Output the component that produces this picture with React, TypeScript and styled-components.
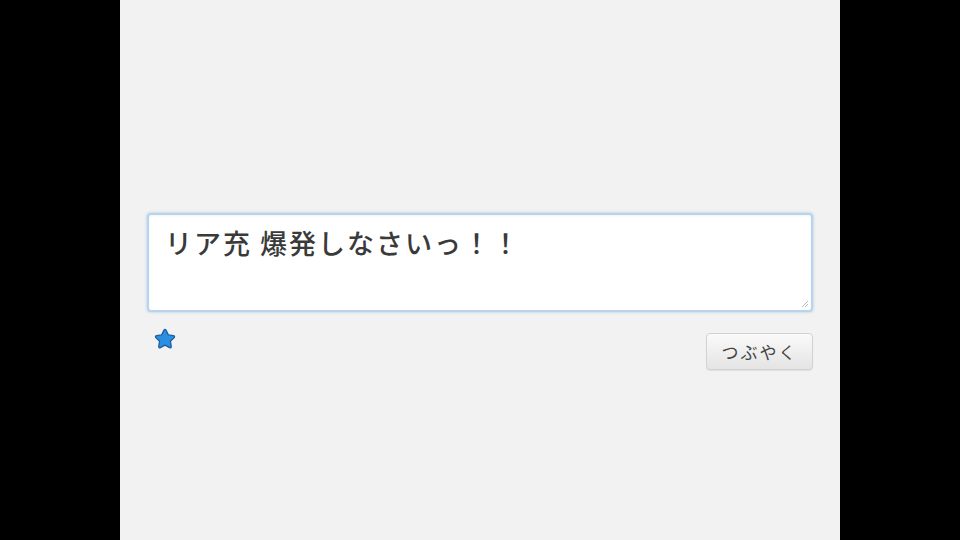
import React from "react";
import styled, { createGlobalStyle } from "styled-components";

const Global = createGlobalStyle`
  html, body { margin: 0; padding: 0; background: #000; }
  body { width: 960px; height: 540px; overflow: hidden; }
`;

const Stage = styled.div`
  width: 960px;
  height: 540px;
  background: #000;
  display: flex;
  justify-content: center;
`;

const Panel = styled.div`
  width: 720px;
  height: 540px;
  background: #f2f2f2;
  box-sizing: border-box;
  padding: 213px 27px 0 27px;
  display: flex;
  flex-direction: column;
`;

const Box = styled.div`
  height: 99px;
  box-sizing: border-box;
  background: #fff;
  border: 2px solid #b7d3ee;
  border-radius: 4px;
  box-shadow: 0 0 3px rgba(120, 170, 220, 0.6), inset 0 1px 2px rgba(0,0,0,0.05);
  padding: 10px 16px;
  position: relative;
  font-family: "Noto Sans CJK JP", "Noto Sans", sans-serif;
  font-size: 27px;
  line-height: 36px;
  letter-spacing: 2px;
  color: #3a3a3a;
  font-weight: 500;
`;

const Grip = styled.svg`
  position: absolute;
  right: 2px;
  bottom: 2px;
`;

const Footer = styled.div`
  display: flex;
  justify-content: space-between;
  align-items: flex-start;
  padding-top: 14px;
`;

const StarWrap = styled.div`
  margin-left: 5px;
  width: 26px;
  height: 26px;
`;

const Button = styled.button`
  margin-top: 7px;
  width: 107px;
  height: 37px;
  border: 1px solid #d2d2d2;
  border-radius: 4px;
  background: linear-gradient(#fafafa, #e4e4e4);
  box-shadow: 0 1px 1px rgba(0,0,0,0.08);
  font-family: "Noto Sans CJK JP", sans-serif;
  font-size: 17px;
  color: #444;
  padding: 0;
  letter-spacing: 2px;
`;

export default function App() {
  return (
    <>
      <Global />
      <Stage>
        <Panel>
          <Box>
            リア充 爆発しなさいっ！！
            <Grip width="8" height="8" viewBox="0 0 8 8">
              <path d="M7 1L1 7M7 4L4 7" stroke="#b8b8b8" strokeWidth="1" />
            </Grip>
          </Box>
          <Footer>
            <StarWrap>
              <svg width="26" height="26" viewBox="0 0 24 24">
                <path
                  d="M12 3.2c.4 0 .7.2.9.6l2.2 4.4 4.8.7c.9.1 1.2 1.2.6 1.8l-3.5 3.4.8 4.8c.2.9-.8 1.5-1.5 1.1L12 17.7l-4.3 2.3c-.8.4-1.7-.2-1.5-1.1l.8-4.8-3.5-3.4c-.6-.6-.3-1.7.6-1.8l4.8-.7 2.2-4.4c.2-.4.5-.6.9-.6z"
                  fill="#2a8fe0"
                  stroke="#1c5fa0"
                  strokeWidth="1.2"
                  strokeLinejoin="round"
                />
              </svg>
            </StarWrap>
            <Button>つぶやく</Button>
          </Footer>
        </Panel>
      </Stage>
    </>
  );
}
